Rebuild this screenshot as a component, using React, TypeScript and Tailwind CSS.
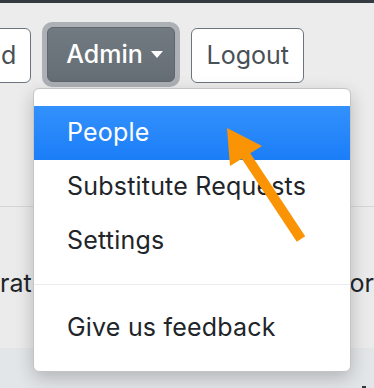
const font = { fontFamily: "Inter, 'Noto Sans', sans-serif" };

function MenuItem({ label, active }: { label: string; active?: boolean }) {
  return (
    <div
      className={
        active
          ? "h-[54px] pl-[33px] flex items-center text-[25px] tracking-[0.2px] text-white bg-gradient-to-b from-[#3391fc] to-[#1a7ef8]"
          : "h-[54px] pl-[33px] flex items-center text-[25px] tracking-[0.2px] text-[#212529]"
      }
    >
      {label}
    </div>
  );
}

export default function App() {
  return (
    <div
      className="relative w-[374px] h-[388px] overflow-hidden bg-[#ececec]"
      style={font}
    >
      <div className="h-[3px] bg-[#343a40]" />

      {/* nav buttons */}
      <div className="flex items-start pt-[25px] h-[203px]">
        <button className="-ml-[30px] h-[55px] pl-[30px] pr-[14px] flex items-center rounded-[6px] border border-[#6c757d] bg-white text-[25px] text-[#495057]">
          d
        </button>
        <div className="ml-[11px] -mt-[6px] rounded-[10px] p-[5px] bg-[#adb1b5]">
          <button className="w-[128px] h-[55px] flex items-center pl-[18px] gap-[8px] rounded-[6px] border border-[#5f666d] bg-gradient-to-b from-[#727a81] to-[#666e75] text-[25px] font-medium text-white">
            Admin
            <span className="w-0 h-0 border-l-[6px] border-r-[6px] border-t-[7px] border-l-transparent border-r-transparent border-t-white" />
          </button>
        </div>
        <button className="ml-[11px] w-[113px] h-[55px] flex items-center justify-center rounded-[6px] border border-[#6c757d] bg-white text-[25px] text-[#495057]">
          Logout
        </button>
      </div>

      <div className="h-px bg-[#d4d7da]" />

      {/* content behind the menu */}
      <div className="h-[141px] flex items-end justify-between pb-[52px] text-[25px] text-[#212529] bg-[#ebebeb]">
        <span className="leading-none">rat</span>
        <span className="leading-none">or</span>
      </div>
      <div className="h-[42px] bg-[#e3e6e9] relative">
        <div className="absolute right-[8px] bottom-0 w-[4px] h-[4px] bg-[#343a40]" />
      </div>

      {/* dropdown */}
      <div className="absolute left-[33px] top-[88px] w-[318px] h-[284px] rounded-[6px] border border-[#c4c4c4] bg-white pt-[17px] shadow-[0_6px_18px_rgba(0,0,0,0.22)] overflow-hidden">
        <MenuItem label="People" active />
        <MenuItem label="Substitute Requests" />
        <MenuItem label="Settings" />
        <div className="my-[16px] h-px bg-[#e9ecef]" />
        <MenuItem label="Give us feedback" />
      </div>

      {/* orange arrow */}
      <svg
        className="absolute left-[220px] top-[120px]"
        width="92"
        height="126"
        viewBox="0 0 92 126"
      >
        <path
          d="M7 8 L42 26 L30.2 33.2 L85.2 116.2 L76.8 121.8 L21.8 38.8 L10 46 Z"
          fill="#fb9404"
        />
      </svg>
    </div>
  );
}
